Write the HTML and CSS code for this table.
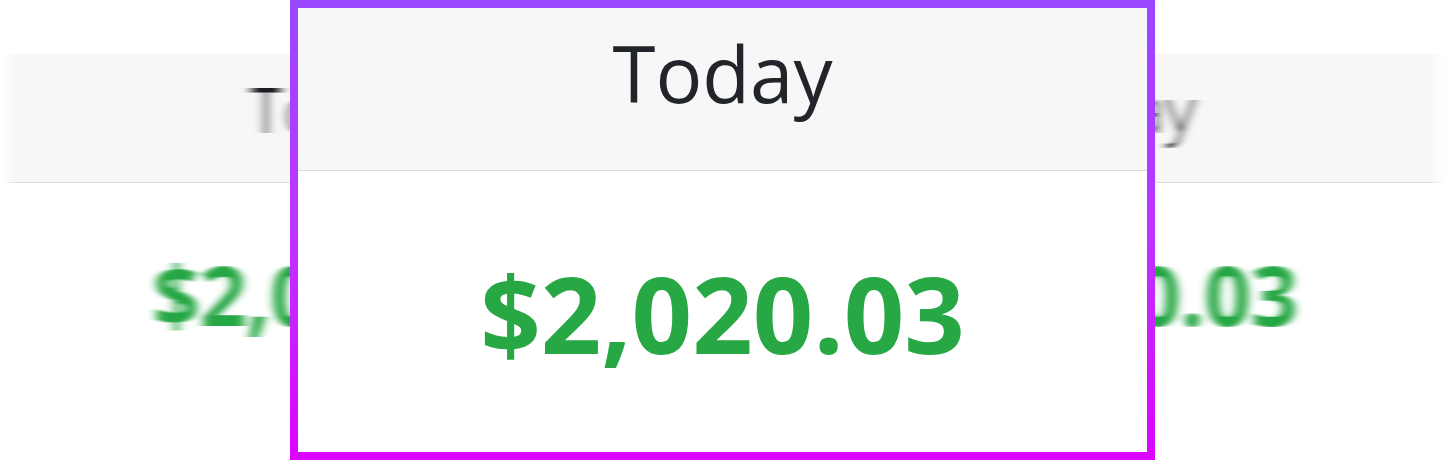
FILE: index.html
```html
<!DOCTYPE html>
<html lang="en">
<head>
<meta charset="utf-8">
<title>Today</title>
<link rel="stylesheet" href="styles.css">
</head>
<body>
<svg class="defs" width="0" height="0" aria-hidden="true">
  <defs>
    <filter id="hblur" x="-5%" y="-5%" width="110%" height="110%">
      <feGaussianBlur stdDeviation="5 0"/>
    </filter>
  </defs>
</svg>

<div class="ghost">
  <div class="ghost-header">
    <div class="ghost-col">Today</div>
    <div class="ghost-col">Today</div>
  </div>
  <div class="ghost-body">
    <div class="ghost-col">$2,020.03</div>
    <div class="ghost-col">$2,020.03</div>
  </div>
</div>

<div class="card">
  <div class="card-inner">
    <div class="card-header">Today</div>
    <div class="card-body">$2,020.03</div>
  </div>
</div>
</body>
</html>
```

FILE: styles.css
```css
html, body {
  margin: 0;
  padding: 0;
  background: #ffffff;
}

body {
  width: 1450px;
  height: 460px;
  overflow: hidden;
  position: relative;
  font-family: "Open Sans", "Noto Sans", sans-serif;
  color: #212529;
}

.defs {
  position: absolute;
  width: 0;
  height: 0;
}

/* blurred background card */
.ghost {
  margin: 54px 0 0 8px;
  width: 1429px;
  filter: url(#hblur);
}

.ghost-header {
  height: 128px;
  background: #f7f7f7;
  border-bottom: 1px solid #dcdcdc;
  display: grid;
  grid-template-columns: 600px 600px;
  column-gap: 170px;
  justify-content: center;
  font-size: 63px;
  line-height: 1;
  font-weight: 500;
  color: #1a1d20;
}

.ghost-header .ghost-col {
  padding-top: 23px;
  text-align: center;
}

.ghost-body {
  display: grid;
  grid-template-columns: 600px 600px;
  column-gap: 170px;
  justify-content: center;
  font-size: 82px;
  line-height: 1;
  font-weight: 700;
  color: #28a745;
}

.ghost-body .ghost-col {
  padding-top: 70px;
  padding-left: 6px;
  text-align: center;
}

/* front card */
.card {
  position: absolute;
  left: 290px;
  top: 0;
  width: 865px;
  height: 460px;
  box-sizing: border-box;
  padding: 8px;
  background: linear-gradient(180deg, #9a48ff 0%, #bd34ff 50%, #dc04ff 100%);
}

.card-inner {
  height: 100%;
  display: flex;
  flex-direction: column;
  background: #ffffff;
}

.card-header {
  height: 136px;
  padding-top: 26px;
  background: #f7f7f7;
  border-bottom: 1px solid #dcdcdc;
  text-align: center;
  font-size: 78px;
  line-height: 1;
  font-weight: 500;
  color: #212529;
}

.card-body {
  flex: 1;
  padding-top: 89px;
  text-align: center;
  font-size: 106px;
  line-height: 1;
  font-weight: 700;
  color: #28a745;
}
```
